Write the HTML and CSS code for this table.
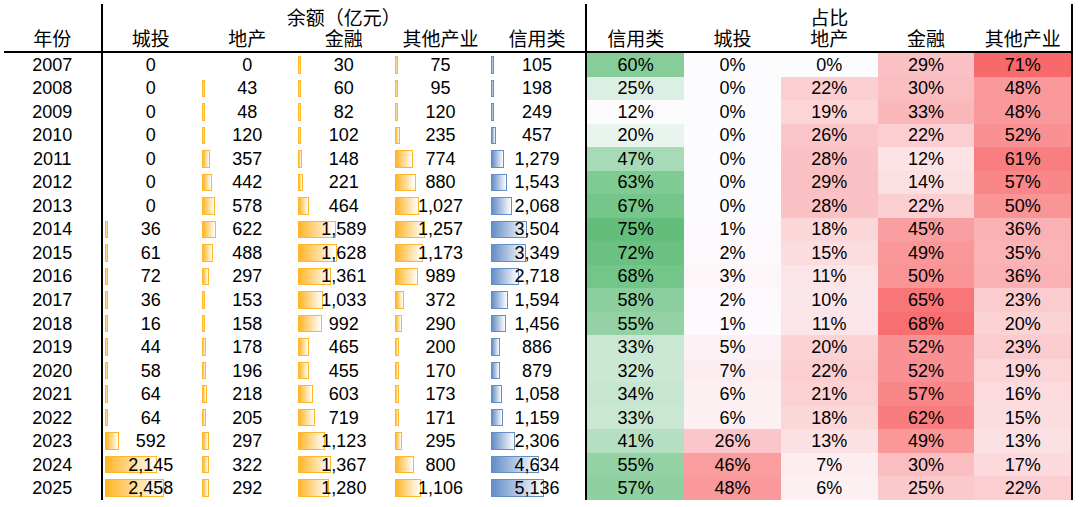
FILE: index.html
```html
<!DOCTYPE html>
<html lang="zh">
<head>
<meta charset="utf-8">
<title>余额与占比</title>
<link rel="stylesheet" href="styles.css">
</head>
<body>
<div class="sheet">
  <div class="rule v1"></div>
  <div class="rule v2"></div>
  <div class="rule v3"></div>
  <div class="hrule"></div>

  <div class="hd top"></div>
  <div class="hd top span5">余额（亿元）</div>
  <div class="hd top span5">占比</div>

  <div class="hd">年份</div>
  <div class="hd">城投</div>
  <div class="hd">地产</div>
  <div class="hd">金融</div>
  <div class="hd">其他产业</div>
  <div class="hd">信用类</div>
  <div class="hd">信用类</div>
  <div class="hd">城投</div>
  <div class="hd">地产</div>
  <div class="hd">金融</div>
  <div class="hd">其他产业</div>

  <div class="yr">2007</div>
  <div class="amt"><span>0</span></div>
  <div class="amt"><span>0</span></div>
  <div class="amt"><i class="bar bo" style="width:3px"></i><span>30</span></div>
  <div class="amt"><i class="bar bo" style="width:3px"></i><span>75</span></div>
  <div class="amt"><i class="bar bb" style="width:3px"></i><span>105</span></div>
  <div class="pct" style="background:#87CD9A">60%</div>
  <div class="pct" style="background:#FCFCFF">0%</div>
  <div class="pct" style="background:#FCFCFF">0%</div>
  <div class="pct" style="background:#FAC0C3">29%</div>
  <div class="pct" style="background:#F8696B">71%</div>

  <div class="yr">2008</div>
  <div class="amt"><span>0</span></div>
  <div class="amt"><i class="bar bo" style="width:3px"></i><span>43</span></div>
  <div class="amt"><i class="bar bo" style="width:3px"></i><span>60</span></div>
  <div class="amt"><i class="bar bo" style="width:3px"></i><span>95</span></div>
  <div class="amt"><i class="bar bb" style="width:3px"></i><span>198</span></div>
  <div class="pct" style="background:#DCEFE4">25%</div>
  <div class="pct" style="background:#FCFCFF">0%</div>
  <div class="pct" style="background:#FBCED1">22%</div>
  <div class="pct" style="background:#FABEC0">30%</div>
  <div class="pct" style="background:#F9999B">48%</div>

  <div class="yr">2009</div>
  <div class="amt"><span>0</span></div>
  <div class="amt"><i class="bar bo" style="width:3px"></i><span>48</span></div>
  <div class="amt"><i class="bar bo" style="width:3px"></i><span>82</span></div>
  <div class="amt"><i class="bar bo" style="width:3px"></i><span>120</span></div>
  <div class="amt"><i class="bar bb" style="width:3px"></i><span>249</span></div>
  <div class="pct" style="background:#FCFCFF">12%</div>
  <div class="pct" style="background:#FCFCFF">0%</div>
  <div class="pct" style="background:#FBD5D7">19%</div>
  <div class="pct" style="background:#FAB8BA">33%</div>
  <div class="pct" style="background:#F9999B">48%</div>

  <div class="yr">2010</div>
  <div class="amt"><span>0</span></div>
  <div class="amt"><i class="bar bo" style="width:3px"></i><span>120</span></div>
  <div class="amt"><i class="bar bo" style="width:3px"></i><span>102</span></div>
  <div class="amt"><i class="bar bo" style="width:5.6px"></i><span>235</span></div>
  <div class="amt"><i class="bar bb" style="width:4.7px"></i><span>457</span></div>
  <div class="pct" style="background:#E9F4EE">20%</div>
  <div class="pct" style="background:#FCFCFF">0%</div>
  <div class="pct" style="background:#FBC6C9">26%</div>
  <div class="pct" style="background:#FBCED1">22%</div>
  <div class="pct" style="background:#F99093">52%</div>

  <div class="yr">2011</div>
  <div class="amt"><span>0</span></div>
  <div class="amt"><i class="bar bo" style="width:8.6px"></i><span>357</span></div>
  <div class="amt"><i class="bar bo" style="width:3.6px"></i><span>148</span></div>
  <div class="amt"><i class="bar bo" style="width:18.6px"></i><span>774</span></div>
  <div class="amt"><i class="bar bb" style="width:13.1px"></i><span>1,279</span></div>
  <div class="pct" style="background:#A7DAB6">47%</div>
  <div class="pct" style="background:#FCFCFF">0%</div>
  <div class="pct" style="background:#FAC2C5">28%</div>
  <div class="pct" style="background:#FBE3E6">12%</div>
  <div class="pct" style="background:#F97E80">61%</div>

  <div class="yr">2012</div>
  <div class="amt"><span>0</span></div>
  <div class="amt"><i class="bar bo" style="width:10.6px"></i><span>442</span></div>
  <div class="amt"><i class="bar bo" style="width:5.3px"></i><span>221</span></div>
  <div class="amt"><i class="bar bo" style="width:21.1px"></i><span>880</span></div>
  <div class="amt"><i class="bar bb" style="width:15.8px"></i><span>1,543</span></div>
  <div class="pct" style="background:#80CA94">63%</div>
  <div class="pct" style="background:#FCFCFF">0%</div>
  <div class="pct" style="background:#FAC0C3">29%</div>
  <div class="pct" style="background:#FBDFE2">14%</div>
  <div class="pct" style="background:#F98688">57%</div>

  <div class="yr">2013</div>
  <div class="amt"><span>0</span></div>
  <div class="amt"><i class="bar bo" style="width:13.9px"></i><span>578</span></div>
  <div class="amt"><i class="bar bo" style="width:11.1px"></i><span>464</span></div>
  <div class="amt"><i class="bar bo" style="width:24.6px"></i><span>1,027</span></div>
  <div class="amt"><i class="bar bb" style="width:21.2px"></i><span>2,068</span></div>
  <div class="pct" style="background:#76C68C">67%</div>
  <div class="pct" style="background:#FCFCFF">0%</div>
  <div class="pct" style="background:#FAC2C5">28%</div>
  <div class="pct" style="background:#FBCED1">22%</div>
  <div class="pct" style="background:#F99497">50%</div>

  <div class="yr">2014</div>
  <div class="amt"><i class="bar bo" style="width:3px"></i><span>36</span></div>
  <div class="amt"><i class="bar bo" style="width:14.9px"></i><span>622</span></div>
  <div class="amt"><i class="bar bo" style="width:38.1px"></i><span>1,589</span></div>
  <div class="amt"><i class="bar bo" style="width:30.2px"></i><span>1,257</span></div>
  <div class="amt"><i class="bar bb" style="width:36px"></i><span>3,504</span></div>
  <div class="pct" style="background:#63BE7B">75%</div>
  <div class="pct" style="background:#FCFAFD">1%</div>
  <div class="pct" style="background:#FBD7D9">18%</div>
  <div class="pct" style="background:#F99FA1">45%</div>
  <div class="pct" style="background:#FAB1B4">36%</div>

  <div class="yr">2015</div>
  <div class="amt"><i class="bar bo" style="width:3px"></i><span>61</span></div>
  <div class="amt"><i class="bar bo" style="width:11.7px"></i><span>488</span></div>
  <div class="amt"><i class="bar bo" style="width:39.1px"></i><span>1,628</span></div>
  <div class="amt"><i class="bar bo" style="width:28.2px"></i><span>1,173</span></div>
  <div class="amt"><i class="bar bb" style="width:34.4px"></i><span>3,349</span></div>
  <div class="pct" style="background:#6AC181">72%</div>
  <div class="pct" style="background:#FCF8FB">2%</div>
  <div class="pct" style="background:#FBDDE0">15%</div>
  <div class="pct" style="background:#F99799">49%</div>
  <div class="pct" style="background:#FAB4B6">35%</div>

  <div class="yr">2016</div>
  <div class="amt"><i class="bar bo" style="width:3px"></i><span>72</span></div>
  <div class="amt"><i class="bar bo" style="width:7.1px"></i><span>297</span></div>
  <div class="amt"><i class="bar bo" style="width:32.7px"></i><span>1,361</span></div>
  <div class="amt"><i class="bar bo" style="width:23.7px"></i><span>989</span></div>
  <div class="amt"><i class="bar bb" style="width:27.9px"></i><span>2,718</span></div>
  <div class="pct" style="background:#74C58A">68%</div>
  <div class="pct" style="background:#FCF6F9">3%</div>
  <div class="pct" style="background:#FBE5E8">11%</div>
  <div class="pct" style="background:#F99497">50%</div>
  <div class="pct" style="background:#FAB1B4">36%</div>

  <div class="yr">2017</div>
  <div class="amt"><i class="bar bo" style="width:3px"></i><span>36</span></div>
  <div class="amt"><i class="bar bo" style="width:3.7px"></i><span>153</span></div>
  <div class="amt"><i class="bar bo" style="width:24.8px"></i><span>1,033</span></div>
  <div class="amt"><i class="bar bo" style="width:8.9px"></i><span>372</span></div>
  <div class="amt"><i class="bar bb" style="width:16.4px"></i><span>1,594</span></div>
  <div class="pct" style="background:#8CCF9F">58%</div>
  <div class="pct" style="background:#FCF8FB">2%</div>
  <div class="pct" style="background:#FBE7EA">10%</div>
  <div class="pct" style="background:#F87578">65%</div>
  <div class="pct" style="background:#FBCCCF">23%</div>

  <div class="yr">2018</div>
  <div class="amt"><i class="bar bo" style="width:3px"></i><span>16</span></div>
  <div class="amt"><i class="bar bo" style="width:3.8px"></i><span>158</span></div>
  <div class="amt"><i class="bar bo" style="width:23.8px"></i><span>992</span></div>
  <div class="amt"><i class="bar bo" style="width:7px"></i><span>290</span></div>
  <div class="amt"><i class="bar bb" style="width:14.9px"></i><span>1,456</span></div>
  <div class="pct" style="background:#94D2A5">55%</div>
  <div class="pct" style="background:#FCFAFD">1%</div>
  <div class="pct" style="background:#FBE5E8">11%</div>
  <div class="pct" style="background:#F86F71">68%</div>
  <div class="pct" style="background:#FBD3D5">20%</div>

  <div class="yr">2019</div>
  <div class="amt"><i class="bar bo" style="width:3px"></i><span>44</span></div>
  <div class="amt"><i class="bar bo" style="width:4.3px"></i><span>178</span></div>
  <div class="amt"><i class="bar bo" style="width:11.2px"></i><span>465</span></div>
  <div class="amt"><i class="bar bo" style="width:4.8px"></i><span>200</span></div>
  <div class="amt"><i class="bar bb" style="width:9.1px"></i><span>886</span></div>
  <div class="pct" style="background:#C9E7D3">33%</div>
  <div class="pct" style="background:#FCF2F5">5%</div>
  <div class="pct" style="background:#FBD3D5">20%</div>
  <div class="pct" style="background:#F99093">52%</div>
  <div class="pct" style="background:#FBCCCF">23%</div>

  <div class="yr">2020</div>
  <div class="amt"><i class="bar bo" style="width:3px"></i><span>58</span></div>
  <div class="amt"><i class="bar bo" style="width:4.7px"></i><span>196</span></div>
  <div class="amt"><i class="bar bo" style="width:10.9px"></i><span>455</span></div>
  <div class="amt"><i class="bar bo" style="width:4.1px"></i><span>170</span></div>
  <div class="amt"><i class="bar bb" style="width:9px"></i><span>879</span></div>
  <div class="pct" style="background:#CBE8D5">32%</div>
  <div class="pct" style="background:#FCEEF0">7%</div>
  <div class="pct" style="background:#FBCED1">22%</div>
  <div class="pct" style="background:#F99093">52%</div>
  <div class="pct" style="background:#FBD5D7">19%</div>

  <div class="yr">2021</div>
  <div class="amt"><i class="bar bo" style="width:3px"></i><span>64</span></div>
  <div class="amt"><i class="bar bo" style="width:5.2px"></i><span>218</span></div>
  <div class="amt"><i class="bar bo" style="width:14.5px"></i><span>603</span></div>
  <div class="amt"><i class="bar bo" style="width:4.2px"></i><span>173</span></div>
  <div class="amt"><i class="bar bb" style="width:10.9px"></i><span>1,058</span></div>
  <div class="pct" style="background:#C7E6D1">34%</div>
  <div class="pct" style="background:#FCF0F2">6%</div>
  <div class="pct" style="background:#FBD1D3">21%</div>
  <div class="pct" style="background:#F98688">57%</div>
  <div class="pct" style="background:#FBDBDE">16%</div>

  <div class="yr">2022</div>
  <div class="amt"><i class="bar bo" style="width:3px"></i><span>64</span></div>
  <div class="amt"><i class="bar bo" style="width:4.9px"></i><span>205</span></div>
  <div class="amt"><i class="bar bo" style="width:17.3px"></i><span>719</span></div>
  <div class="amt"><i class="bar bo" style="width:4.1px"></i><span>171</span></div>
  <div class="amt"><i class="bar bb" style="width:11.9px"></i><span>1,159</span></div>
  <div class="pct" style="background:#C9E7D3">33%</div>
  <div class="pct" style="background:#FCF0F2">6%</div>
  <div class="pct" style="background:#FBD7D9">18%</div>
  <div class="pct" style="background:#F97C7E">62%</div>
  <div class="pct" style="background:#FBDDE0">15%</div>

  <div class="yr">2023</div>
  <div class="amt"><i class="bar bo" style="width:14.2px"></i><span>592</span></div>
  <div class="amt"><i class="bar bo" style="width:7.1px"></i><span>297</span></div>
  <div class="amt"><i class="bar bo" style="width:27px"></i><span>1,123</span></div>
  <div class="amt"><i class="bar bo" style="width:7.1px"></i><span>295</span></div>
  <div class="amt"><i class="bar bb" style="width:23.7px"></i><span>2,306</span></div>
  <div class="pct" style="background:#B6DFC2">41%</div>
  <div class="pct" style="background:#FBC6C9">26%</div>
  <div class="pct" style="background:#FBE1E4">13%</div>
  <div class="pct" style="background:#F99799">49%</div>
  <div class="pct" style="background:#FBE1E4">13%</div>

  <div class="yr">2024</div>
  <div class="amt"><i class="bar bo" style="width:51.5px"></i><span>2,145</span></div>
  <div class="amt"><i class="bar bo" style="width:7.7px"></i><span>322</span></div>
  <div class="amt"><i class="bar bo" style="width:32.8px"></i><span>1,367</span></div>
  <div class="amt"><i class="bar bo" style="width:19.2px"></i><span>800</span></div>
  <div class="amt"><i class="bar bb" style="width:47.5px"></i><span>4,634</span></div>
  <div class="pct" style="background:#94D2A5">55%</div>
  <div class="pct" style="background:#F99D9F">46%</div>
  <div class="pct" style="background:#FCEEF0">7%</div>
  <div class="pct" style="background:#FABEC0">30%</div>
  <div class="pct" style="background:#FBD9DC">17%</div>

  <div class="yr">2025</div>
  <div class="amt"><i class="bar bo" style="width:59px"></i><span>2,458</span></div>
  <div class="amt"><i class="bar bo" style="width:7px"></i><span>292</span></div>
  <div class="amt"><i class="bar bo" style="width:30.7px"></i><span>1,280</span></div>
  <div class="amt"><i class="bar bo" style="width:26.5px"></i><span>1,106</span></div>
  <div class="amt"><i class="bar bb" style="width:52.7px"></i><span>5,136</span></div>
  <div class="pct" style="background:#8FD0A1">57%</div>
  <div class="pct" style="background:#F9999B">48%</div>
  <div class="pct" style="background:#FCF0F2">6%</div>
  <div class="pct" style="background:#FBC8CB">25%</div>
  <div class="pct" style="background:#FBCED1">22%</div>
</div>
</body>
</html>
```

FILE: styles.css
```css
html, body {
  margin: 0;
  padding: 0;
  background: #ffffff;
}

body {
  font-family: "Liberation Sans", Arial, "Noto Sans CJK SC", sans-serif;
  color: #000000;
}

.sheet {
  display: grid;
  grid-template-columns: 96.5px 2px repeat(5, 96.56px) 2px repeat(5, 96.8px) 2px;
  grid-template-rows: 24px 23px 2px repeat(19, 1fr);
  height: 496px;
  width: max-content;
  margin: 4px 0 0 4px;
}

.rule {
  grid-row: 1 / -1;
  background: #000000;
}

.v1 { grid-column: 2; }
.v2 { grid-column: 8; }
.v3 { grid-column: 14; }

.hrule {
  grid-row: 3;
  grid-column: 1 / -1;
  background: #000000;
}

.hd {
  display: flex;
  justify-content: center;
  align-items: flex-end;
  font-family: "Liberation Sans", "Noto Sans CJK SC", sans-serif;
  font-size: 19px;
  line-height: 19px;
  padding-bottom: 2px;
  white-space: nowrap;
}

.hd.top {
  padding-bottom: 0;
}

.span5 {
  grid-column: span 5;
}

.yr,
.amt,
.pct {
  display: flex;
  align-items: center;
  justify-content: center;
  font-size: 18px;
  line-height: 1;
  white-space: nowrap;
}

.amt {
  position: relative;
}

.amt span {
  position: relative;
}

.bar {
  position: absolute;
  left: 2.5px;
  top: 3px;
  bottom: 3px;
  box-sizing: border-box;
  border: 1px solid;
}

.bo {
  border-color: #FFB628;
  background: linear-gradient(90deg, #FFB628 0%, #FFFFFF 100%);
}

.bb {
  border-color: #638EC6;
  background: linear-gradient(90deg, #638EC6 0%, #FFFFFF 100%);
}
```
